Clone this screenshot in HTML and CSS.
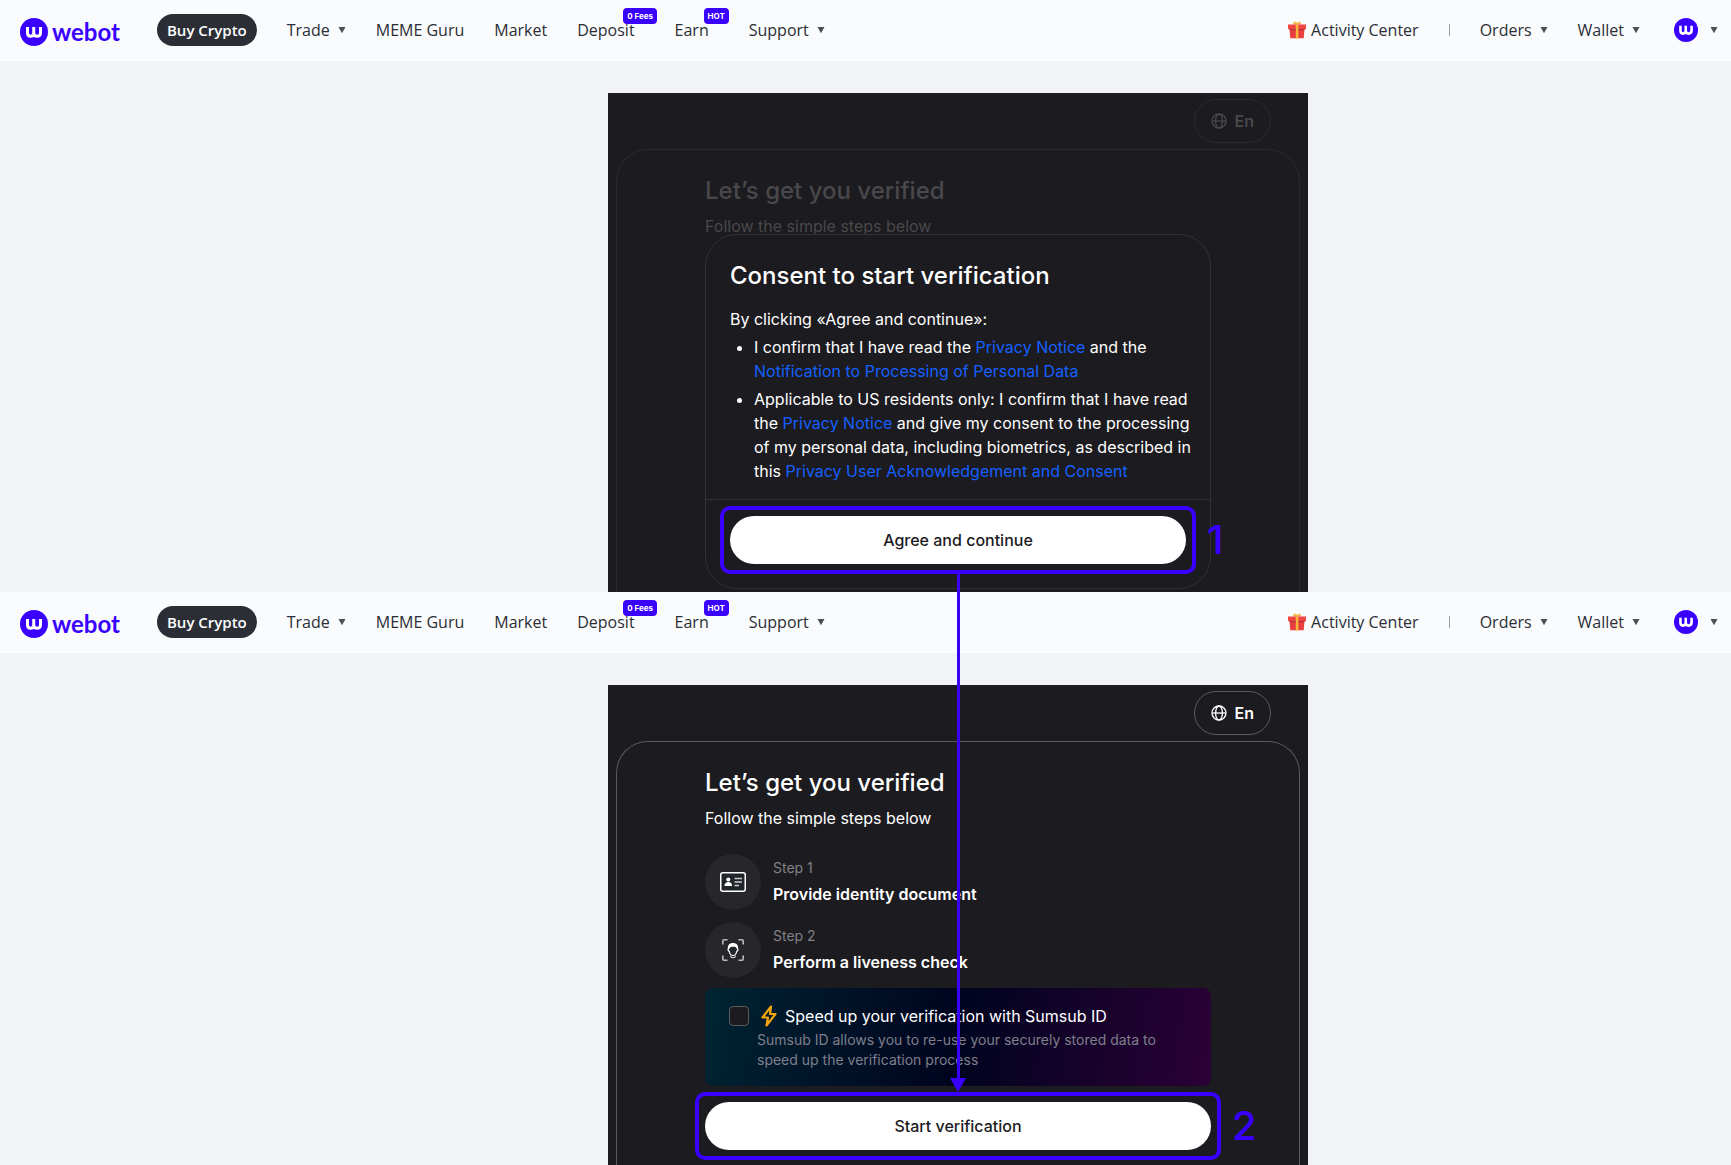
FILE: index.html
```html
<!DOCTYPE html>
<html lang="en">
<head>
    <meta charset="UTF-8">
    <title>Identity verification | Webot</title>
    <link rel="stylesheet" href="styles.css">
</head>
<body>
    <!-- shared icons -->
    <svg class="sprite" aria-hidden="true">
        <symbol id="mark" viewBox="0 0 28 28">
            <circle cx="14" cy="14" r="14" fill="#3a00ff"/>
            <path d="M7.500 9v6c0 2.200 1.200 3.200 3 3.200s3.200-1.200 3.200-3.200V9M13.700 15c0 2.200 1.200 3.200 3.200 3.200s3.600-1.200 3.600-3.200V9" fill="none" stroke="#fff" stroke-width="3"/>
        </symbol>
        <symbol id="caret" viewBox="0 0 8 8"><path d="M0.500 1h7L4 7.200z" fill="#4b4e55"/></symbol>
        <symbol id="gift" viewBox="0 0 18 18">
            <path d="M5 3.500C4.500 1 7.500-.5 9.200 2 11-.2 13.600.8 12.700 3.500z" fill="#f3b64a"/>
            <path d="M0 3.500h18V8H0z" fill="#ef4444"/>
            <path d="M1.500 8h15l-.8 9.200H2.300z" fill="#e8403f"/>
            <path d="M1.300 8h15.400v1.200H1.300z" fill="#b92f35"/>
            <path d="M7.800 3.500h2.600v14H7.800z" fill="#f5b43a"/>
        </symbol>
        <symbol id="globe" viewBox="0 0 16 16">
            <g fill="none" stroke="currentColor" stroke-width="1.300">
                <circle cx="8" cy="8" r="7"/><ellipse cx="8" cy="8" rx="3.400" ry="7"/><path d="M1 8h14"/>
            </g>
        </symbol>
    </svg>

    <section class="screen screen-consent">
        <header class="topbar">
            <a class="logo" href="#"><svg width="28" height="28"><use href="#mark"/></svg>webot</a>
            <nav class="nav">
                <a class="buy" href="#">Buy Crypto</a>
                <a href="#">Trade<svg class="caret"><use href="#caret"/></svg></a>
                <a href="#">MEME Guru</a>
                <a href="#">Market</a>
                <a class="has-badge" href="#">Deposit<span class="badge fees">0 Fees</span></a>
                <a class="has-badge" href="#">Earn<span class="badge hot">HOT</span></a>
                <a href="#">Support<svg class="caret"><use href="#caret"/></svg></a>
            </nav>
            <nav class="nav nav-right">
                <a href="#"><svg class="gift"><use href="#gift"/></svg>Activity Center</a>
                <span class="sep"></span>
                <a href="#">Orders<svg class="caret"><use href="#caret"/></svg></a>
                <a href="#">Wallet<svg class="caret"><use href="#caret"/></svg></a>
                <a class="account" href="#" aria-label="Account"><svg width="24" height="24"><use href="#mark"/></svg><svg class="caret"><use href="#caret"/></svg></a>
            </nav>
        </header>
        <main class="stage">
            <div class="panel dimmed">
                <div class="panel-top">
                    <button class="lang"><svg width="16" height="16"><use href="#globe"/></svg>En</button>
                </div>
                <div class="card">
                    <h1>Let’s get you verified</h1>
                    <p class="sub">Follow the simple steps below</p>
                    <div class="modal">
                        <div class="modal-body">
                            <h2>Consent to start verification</h2>
                            <p>By clicking «Agree and continue»:</p>
                            <ul>
                                <li>I confirm that I have read the <a href="#">Privacy Notice</a> and the <a href="#">Notification to Processing of Personal Data</a></li>
                                <li>Applicable to US residents only: I confirm that I have read the <a href="#">Privacy Notice</a> and give my consent to the processing of my personal data, including biometrics, as described in this <a href="#">Privacy User Acknowledgement and Consent</a></li>
                            </ul>
                        </div>
                        <div class="modal-foot">
                            <div class="mark">
                                <button class="primary">Agree and continue</button>
                                <span class="num">1</span>
                                <span class="arrow"></span>
                            </div>
                        </div>
                    </div>
                </div>
            </div>
        </main>
    </section>

    <section class="screen">
        <header class="topbar">
            <a class="logo" href="#"><svg width="28" height="28"><use href="#mark"/></svg>webot</a>
            <nav class="nav">
                <a class="buy" href="#">Buy Crypto</a>
                <a href="#">Trade<svg class="caret"><use href="#caret"/></svg></a>
                <a href="#">MEME Guru</a>
                <a href="#">Market</a>
                <a class="has-badge" href="#">Deposit<span class="badge fees">0 Fees</span></a>
                <a class="has-badge" href="#">Earn<span class="badge hot">HOT</span></a>
                <a href="#">Support<svg class="caret"><use href="#caret"/></svg></a>
            </nav>
            <nav class="nav nav-right">
                <a href="#"><svg class="gift"><use href="#gift"/></svg>Activity Center</a>
                <span class="sep"></span>
                <a href="#">Orders<svg class="caret"><use href="#caret"/></svg></a>
                <a href="#">Wallet<svg class="caret"><use href="#caret"/></svg></a>
                <a class="account" href="#" aria-label="Account"><svg width="24" height="24"><use href="#mark"/></svg><svg class="caret"><use href="#caret"/></svg></a>
            </nav>
        </header>
        <main class="stage">
            <div class="panel">
                <div class="panel-top">
                    <button class="lang"><svg width="16" height="16"><use href="#globe"/></svg>En</button>
                </div>
                <div class="card">
                    <h1>Let’s get you verified</h1>
                    <p class="sub">Follow the simple steps below</p>
                    <div class="steps">
                        <div class="step">
                            <span class="step-icon">
                                <svg width="26" height="20" viewBox="0 0 26 20">
                                    <rect x="0.750" y="0.750" width="24.500" height="18.500" rx="2" fill="#1f252b" stroke="#fff" stroke-width="1.500"/>
                                    <circle cx="8.300" cy="7.500" r="2" fill="#fff"/>
                                    <path d="M4.500 14c0-2.500 1.500-4 3.800-4s3.800 1.500 3.800 4z" fill="#fff"/>
                                    <path d="M14.500 6.500H22M14.500 10H22M14.500 13.500h4.500" stroke="#ccc" stroke-width="1.300"/>
                                </svg>
                            </span>
                            <div>
                                <div class="step-no">Step 1</div>
                                <div class="step-name">Provide identity document</div>
                            </div>
                        </div>
                        <div class="step">
                            <span class="step-icon">
                                <svg width="24" height="24" viewBox="0 0 24 24">
                                    <path d="M1.800 6.500V3c0-.7.500-1.200 1.200-1.200h3.500M17.500 1.800H21c.7 0 1.200.5 1.200 1.200v3.500M22.200 17.500V21c0 .7-.5 1.200-1.200 1.200h-3.500M6.500 22.200H3c-.7 0-1.200-.5-1.200-1.200v-3.500" fill="none" stroke="#bbb" stroke-width="1.600"/>
                                    <path d="M7.500 10c-.8 1.500 0 3 .8 3.500.4 2 2 4 3.700 4s3.300-2 3.700-4c.8-.5 1.600-2 .8-3.500" fill="#1f252b" stroke="#fff" stroke-width="1.200"/>
                                    <path d="M7 11C6.500 7 8.500 5 12 5s5.700 2.200 5 6l-1.200-.2C15 8.500 13.500 8.800 12 8.800S8.800 9 8.200 11z" fill="#fff"/>
                                    <path d="M9.800 17.500v1.300c1 1.200 3.400 1.200 4.400 0v-1.300" fill="none" stroke="#ccc" stroke-width="1.200"/>
                                </svg>
                            </span>
                            <div>
                                <div class="step-no">Step 2</div>
                                <div class="step-name">Perform a liveness check</div>
                            </div>
                        </div>
                    </div>
                    <div class="speed">
                        <label class="speed-title">
                            <input type="checkbox">
                            <svg width="16" height="22" viewBox="0 0 16 22"><path d="M10 1.500L1.500 12.500H7L5.500 20.500l9-11.500H9z" fill="none" stroke="#f5a60a" stroke-width="2.200" stroke-linejoin="round"/></svg>
                            Speed up your verification with Sumsub ID
                        </label>
                        <p>Sumsub ID allows you to re-use your securely stored data to speed up the verification process</p>
                    </div>
                    <div class="mark">
                        <button class="primary">Start verification</button>
                        <span class="num">2</span>
                    </div>
                </div>
            </div>
        </main>
    </section>
</body>
</html>
```
FILE: styles.css
```css
* { box-sizing: border-box; }
body {
    margin: 0;
    background: #f1f3f5;
    font-family: Inter, sans-serif;
    font-size: 16px;
    line-height: 24px;
}
h1, h2, p, ul { margin: 0; }
a { text-decoration: none; }
button { font: inherit; cursor: pointer; }
.sprite { position: absolute; width: 0; height: 0; }

.screen { position: relative; }
.screen-consent { z-index: 1; }

/* top bar */
.topbar {
    display: flex;
    align-items: center;
    height: 61px;
    padding: 0 13px 2px 20px;
    background: #fafbfd;
    font-family: "Open Sans", sans-serif;
}
.logo {
    display: flex;
    align-items: center;
    gap: 4px;
    margin-right: 37px;
    padding-top: 5px;
    color: #3a00ff;
    font: bold 24px/28px Lato, sans-serif;
}
.nav {
    display: flex;
    align-items: center;
    gap: 30px;
}
.nav a {
    position: relative;
    display: flex;
    align-items: center;
    color: #2b2e35;
}
.nav .buy {
    height: 32px;
    padding: 0 10px;
    border-radius: 16px;
    background: #2b2e35;
    color: #fff;
    font-size: 15px;
    font-weight: 600;
}
.nav .has-badge { margin-right: 10px; }
.nav-right { margin-left: auto; }
.caret { width: 8px; height: 8px; margin-left: 8px; }
.gift { width: 18px; height: 18px; margin-right: 5px; }
.sep { width: 1px; height: 12px; background: #9a9ca3; }
.nav .account { margin-left: 4px; }
.account .caret { margin-left: 12px; }
.badge {
    position: absolute;
    top: -10px;
    padding: 0 4px;
    border-radius: 4px;
    background: #3a00ff;
    color: #fff;
    font: bold 8px/16px Inter, sans-serif;
    white-space: nowrap;
}
.fees { left: 46px; }
.hot { left: 29px; }

/* verification panel */
.stage { padding: 32px 0 0 185px; }
.panel {
    width: 700px;
    margin: 0 auto;
    padding: 0 8px;
    background: #1c1b1f;
    color: #fff;
}
.panel-top {
    display: flex;
    justify-content: flex-end;
    height: 56px;
    padding: 6px 29px 0;
}
.lang {
    display: flex;
    align-items: center;
    gap: 8px;
    height: 44px;
    padding: 0 16px;
    border: 1px solid #5b5a5e;
    border-radius: 22px;
    background: none;
    color: #fff;
    font-weight: 600;
}
.card {
    padding: 24px 88px 15px;
    border: 1px solid #5b5a5e;
    border-bottom: 0;
    border-radius: 32px 32px 0 0;
}
h1, h2 { font-size: 24px; font-weight: 500; line-height: 34px; }
.sub { margin-top: 6px; }

.dimmed .lang, .dimmed .card { border-color: #2b2a2e; }
.dimmed .lang, .dimmed h1, .dimmed .sub { color: #49484b; }
.dimmed .card { padding-bottom: 3px; }

/* consent dialog */
.modal {
    position: relative;
    margin-top: -4px;
    border: 1px solid #323135;
    border-radius: 32px;
    background: #1c1b1f;
}
.modal-body { padding: 24px 12px 16px 24px; }
.modal-body p { margin-top: 14px; }
.modal-body ul { padding-left: 24px; }
.modal-body li { margin-top: 4px; }
.modal-body a { color: #1560ff; }
.modal-foot {
    padding: 16px 24px 24px;
    border-top: 1px solid #323135;
}

.primary {
    display: block;
    width: 100%;
    height: 48px;
    border: 0;
    border-radius: 24px;
    background: #fff;
    color: #1c1b1f;
    font-weight: 500;
}

/* numbered outline round a button */
.mark { position: relative; }
.mark::after {
    content: "";
    position: absolute;
    inset: -10px;
    border: 4px solid #3a00ff;
    border-radius: 10px;
    pointer-events: none;
}
.num {
    position: absolute;
    top: 0;
    left: calc(100% + 21px);
    color: #3a00ff;
    font-size: 40px;
    font-weight: 500;
    line-height: 48px;
}
.arrow {
    position: absolute;
    top: calc(100% + 10px);
    left: 50%;
    width: 3px;
    height: 518px;
    margin-left: -1px;
    background: linear-gradient(#3a00ff, #3a00ff) top / 3px 508px no-repeat;
}
.arrow::after {
    content: "";
    position: absolute;
    bottom: 0;
    left: -7px;
    border: solid transparent;
    border-width: 14px 8px 0;
    border-top-color: #3a00ff;
}

/* steps */
.steps {
    display: flex;
    flex-direction: column;
    gap: 12px;
    margin-top: 24px;
}
.step { display: flex; align-items: center; gap: 12px; }
.step-icon {
    display: flex;
    align-items: center;
    justify-content: center;
    width: 56px;
    height: 56px;
    border-radius: 50%;
    background: #27262b;
}
.step-no { margin-bottom: 4px; color: #828185; font-size: 14px; line-height: 20px; }
.step-name { font-weight: 600; }

.speed {
    margin: 10px 0 16px;
    padding: 16px 24px;
    border-radius: 8px;
    background: linear-gradient(100deg, #002432, #00041f 50%, #2c0036);
}
.speed-title {
    display: flex;
    align-items: center;
    gap: 8px;
}
.speed-title input {
    appearance: none;
    width: 20px;
    height: 20px;
    margin: 0 4px 0 0;
    border: 1px solid #5b5a5e;
    border-radius: 4px;
    background: #1c1b1f;
}
.speed p {
    margin: 2px 0 0 28px;
    color: #7f7f8b;
    font-size: 14px;
    line-height: 20px;
}
```
